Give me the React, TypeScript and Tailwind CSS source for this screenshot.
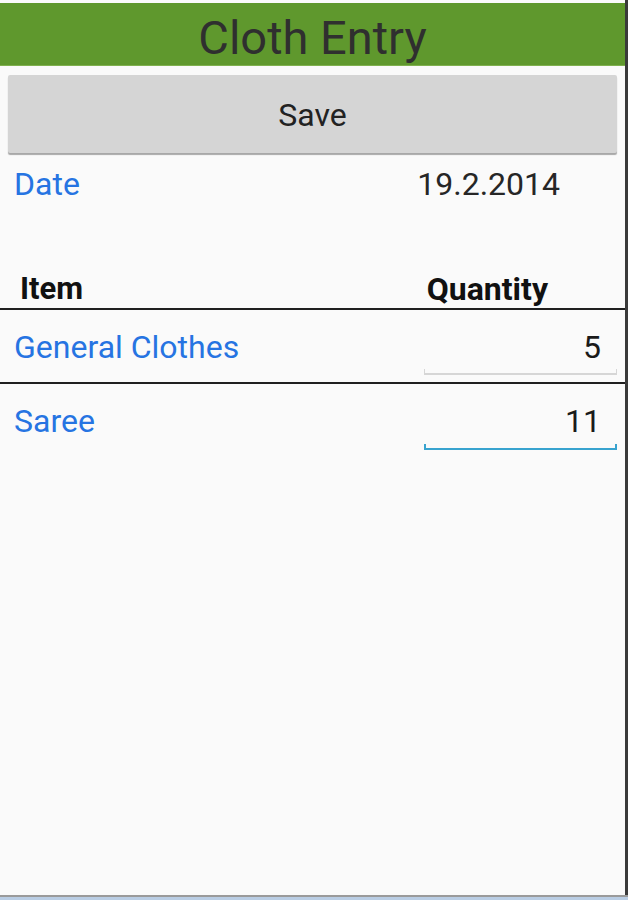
export default function App() {
  const rows = [
    { name: "General Clothes", qty: "5", active: false },
    { name: "Saree", qty: "11", active: true },
  ];

  return (
    <div className="flex h-[900px] w-[628px] flex-col bg-white font-['Roboto',sans-serif]">
      <div className="flex flex-1 flex-col border-r-[3px] border-[#3a3a3a] bg-[#fafafa] pt-[3px]">
        <header className="flex h-[63px] items-center justify-center border-b border-[#7fb04e] bg-[#5f982d] pt-[6px]">
          <h1 className="text-[47px] leading-none text-[#2f2f2f]">Cloth Entry</h1>
        </header>

        <div className="px-2 pt-[9px]">
          <button
            type="button"
            className="flex h-[78px] w-full items-center justify-center rounded-[2px] bg-[#d5d5d5] pt-[2px] text-[32px] text-[#222] shadow-[0_2px_1px_#a8a8a8]"
          >
            Save
          </button>
        </div>

        <div className="mt-3 flex items-center justify-between pr-[65px] pl-[14px] text-[32px] leading-[38px]">
          <span className="text-[#2674e2]">Date</span>
          <span className="text-[#262626]">19.2.2014</span>
        </div>

        <div className="mt-[67px] flex items-center justify-between border-b-2 border-[#1f1f1f] pr-[77px] pl-5 text-[31px] leading-[38px] font-bold text-[#111]">
          <span>Item</span>
          <span className="text-[32px]">Quantity</span>
        </div>

        {rows.map((row, i) => (
          <div
            key={row.name}
            className={
              i === 0
                ? "flex h-[74px] items-start justify-between border-b-2 border-[#1f1f1f] pt-[18px] pl-[14px]"
                : "flex h-[74px] items-start justify-between pt-[18px] pl-[14px]"
            }
          >
            <span className="text-[32px] leading-[38px] text-[#2674e2]">{row.name}</span>
            <div className="mr-2 flex w-[193px] flex-col">
              <span className="pr-[16px] text-right text-[32px] leading-[38px] text-[#1a1a1a]">
                {row.qty}
              </span>
              <div
                className={
                  row.active
                    ? "mt-[4px] h-[6px] border-x-2 border-b-2 border-[#38a3cf]"
                    : "mt-[3px] h-[6px] border-x border-b-2 border-[#d6d6d6]"
                }
              />
            </div>
          </div>
        ))}
      </div>
      <div className="h-[2px] bg-[#9a9a9a]" />
      <div className="h-[3px] bg-[#b9cde4]" />
    </div>
  );
}
